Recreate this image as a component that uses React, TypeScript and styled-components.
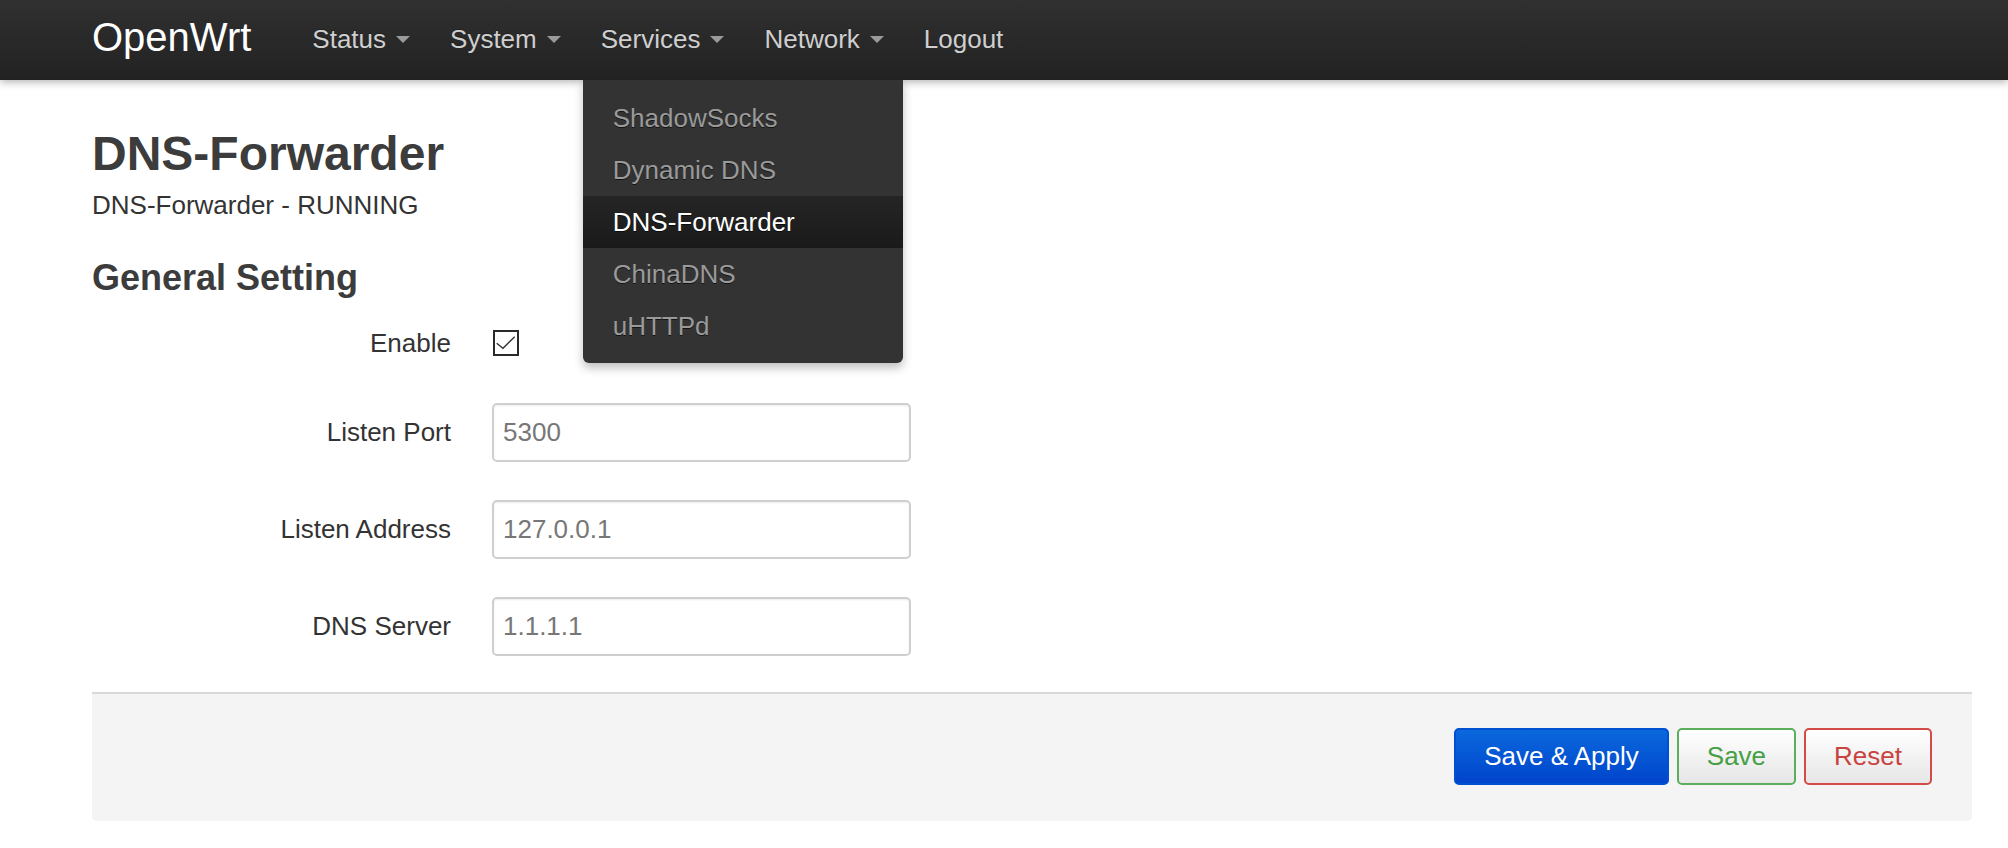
import React from "react";
import styled, { createGlobalStyle } from "styled-components";

const GlobalStyle = createGlobalStyle`
  * { box-sizing: border-box; }
  html, body { margin: 0; padding: 0; background: #fff; }
  body {
    font-family: "Liberation Sans", Arial, Helvetica, sans-serif;
    font-size: 26px;
    color: #333;
  }
`;

const Navbar = styled.header`
  position: relative;
  z-index: 10;
  height: 80px;
  display: flex;
  align-items: flex-start;
  padding-left: 92px;
  background: linear-gradient(to bottom, #303030, #222);
  box-shadow: 0 2px 8px rgba(0, 0, 0, 0.3);
`;

const Brand = styled.a`
  color: #fff;
  font-size: 40px;
  line-height: 74px;
  margin-right: 41px;
  text-decoration: none;
`;

const NavList = styled.nav`
  display: flex;
`;

const NavItem = styled.div`
  position: relative;
`;

const NavLink = styled.a`
  display: flex;
  align-items: center;
  height: 78px;
  padding: 0 20px;
  color: #cfcfcf;
  font-size: 26px;
  text-decoration: none;
  text-shadow: 0 -1px 0 rgba(0, 0, 0, 0.25);
`;

const Caret = styled.span`
  width: 0;
  height: 0;
  margin-left: 10px;
  border-left: 7px solid transparent;
  border-right: 7px solid transparent;
  border-top: 7px solid #9a9a9a;
`;

const Dropdown = styled.ul`
  position: absolute;
  top: 80px;
  left: 2px;
  width: 320px;
  margin: 0;
  padding: 12px 0 11px;
  list-style: none;
  background: #333;
  border-radius: 0 0 6px 6px;
  box-shadow: 0 5px 10px rgba(0, 0, 0, 0.25);
`;

const DropItem = styled.li<{ $active?: boolean }>`
  height: 52px;
  line-height: 52px;
  padding-left: 30px;
  font-size: 26px;
  white-space: nowrap;
  color: ${(p) => (p.$active ? "#fff" : "#9a9a9a")};
  background: ${(p) =>
    p.$active ? "linear-gradient(to bottom, #252525, #1a1a1a)" : "transparent"};
  text-shadow: 0 1px 0 rgba(0, 0, 0, 0.6);
`;

const Main = styled.main`
  padding: 46px 36px 27px 92px;
`;

const Title = styled.h2`
  margin: 0;
  font-size: 48px;
  line-height: 56px;
  font-weight: bold;
  color: #3c3c3c;
`;

const Subtitle = styled.div`
  margin-top: 7px;
  font-size: 26px;
  line-height: 32px;
  color: #333;
`;

const SectionTitle = styled.h3`
  margin: 36px 0 0;
  font-size: 36px;
  line-height: 42px;
  font-weight: bold;
  color: #3c3c3c;
`;

const Fields = styled.div`
  margin-top: 22px;
  display: flex;
  flex-direction: column;
  gap: 38px;
`;

const Row = styled.div<{ $h: number }>`
  display: flex;
  align-items: center;
  height: ${(p) => p.$h}px;
`;

const Label = styled.label`
  width: 359px;
  margin-right: 41px;
  text-align: right;
  color: #333;
`;

const CheckBox = styled.span`
  width: 26px;
  height: 26px;
  margin-left: 1px;
  border: 2px solid #2a2a2a;
  display: flex;
  align-items: center;
  justify-content: center;
`;

const TextInput = styled.input`
  width: 419px;
  height: 59px;
  padding: 0 9px;
  border: 2px solid #cfcfcf;
  border-radius: 5px;
  font-family: inherit;
  font-size: 26px;
  color: #777;
  background: #fff;
  box-shadow: inset 0 1px 2px rgba(0, 0, 0, 0.08);
  outline: none;
`;

const Actions = styled.div`
  margin-top: 36px;
  display: flex;
  justify-content: flex-end;
  gap: 8px;
  padding: 34px 40px 36px;
  background: #f4f4f4;
  border-top: 2px solid #d8d8d8;
  border-radius: 0 0 5px 5px;
`;

type Variant = "primary" | "save" | "reset";

const buttonColors: Record<Variant, { border: string; color: string; bg: string }> = {
  primary: {
    border: "#0050d2",
    color: "#fff",
    bg: "linear-gradient(to bottom, #0a68dc, #0044cc)",
  },
  save: {
    border: "#5cad5c",
    color: "#45a045",
    bg: "linear-gradient(to bottom, #ffffff, #e6e6e6)",
  },
  reset: {
    border: "#d24b47",
    color: "#c9433f",
    bg: "linear-gradient(to bottom, #ffffff, #e6e6e6)",
  },
};

const Button = styled.button<{ $variant: Variant }>`
  height: 57px;
  padding: 0 28px;
  border-radius: 5px;
  border: 2px solid ${(p) => buttonColors[p.$variant].border};
  background: ${(p) => buttonColors[p.$variant].bg};
  color: ${(p) => buttonColors[p.$variant].color};
  font-family: inherit;
  font-size: 26px;
  cursor: pointer;
`;

const navItems = [
  { label: "Status", caret: true },
  { label: "System", caret: true },
  { label: "Services", caret: true, open: true },
  { label: "Network", caret: true },
  { label: "Logout", caret: false },
];

const servicesMenu = ["ShadowSocks", "Dynamic DNS", "DNS-Forwarder", "ChinaDNS", "uHTTPd"];

export default function App() {
  return (
    <>
      <GlobalStyle />
      <Navbar>
        <Brand href="#">OpenWrt</Brand>
        <NavList>
          {navItems.map((item) => (
            <NavItem key={item.label}>
              <NavLink href="#">
                {item.label}
                {item.caret && <Caret />}
              </NavLink>
              {item.open && (
                <Dropdown>
                  {servicesMenu.map((s) => (
                    <DropItem key={s} $active={s === "DNS-Forwarder"}>
                      {s}
                    </DropItem>
                  ))}
                </Dropdown>
              )}
            </NavItem>
          ))}
        </NavList>
      </Navbar>
      <Main>
        <Title>DNS-Forwarder</Title>
        <Subtitle>DNS-Forwarder - RUNNING</Subtitle>
        <SectionTitle>General Setting</SectionTitle>
        <Fields>
          <Row $h={44}>
            <Label>Enable</Label>
            <CheckBox>
              <svg width="22" height="22" viewBox="0 0 22 22">
                <polyline
                  points="1.7,11.3 8,16.3 19.7,4.7"
                  fill="none"
                  stroke="#333"
                  strokeWidth="1.4"
                />
              </svg>
            </CheckBox>
          </Row>
          <Row $h={59}>
            <Label>Listen Port</Label>
            <TextInput defaultValue="5300" />
          </Row>
          <Row $h={59}>
            <Label>Listen Address</Label>
            <TextInput defaultValue="127.0.0.1" />
          </Row>
          <Row $h={59}>
            <Label>DNS Server</Label>
            <TextInput defaultValue="1.1.1.1" />
          </Row>
        </Fields>
        <Actions>
          <Button $variant="primary">Save &amp; Apply</Button>
          <Button $variant="save">Save</Button>
          <Button $variant="reset">Reset</Button>
        </Actions>
      </Main>
    </>
  );
}
